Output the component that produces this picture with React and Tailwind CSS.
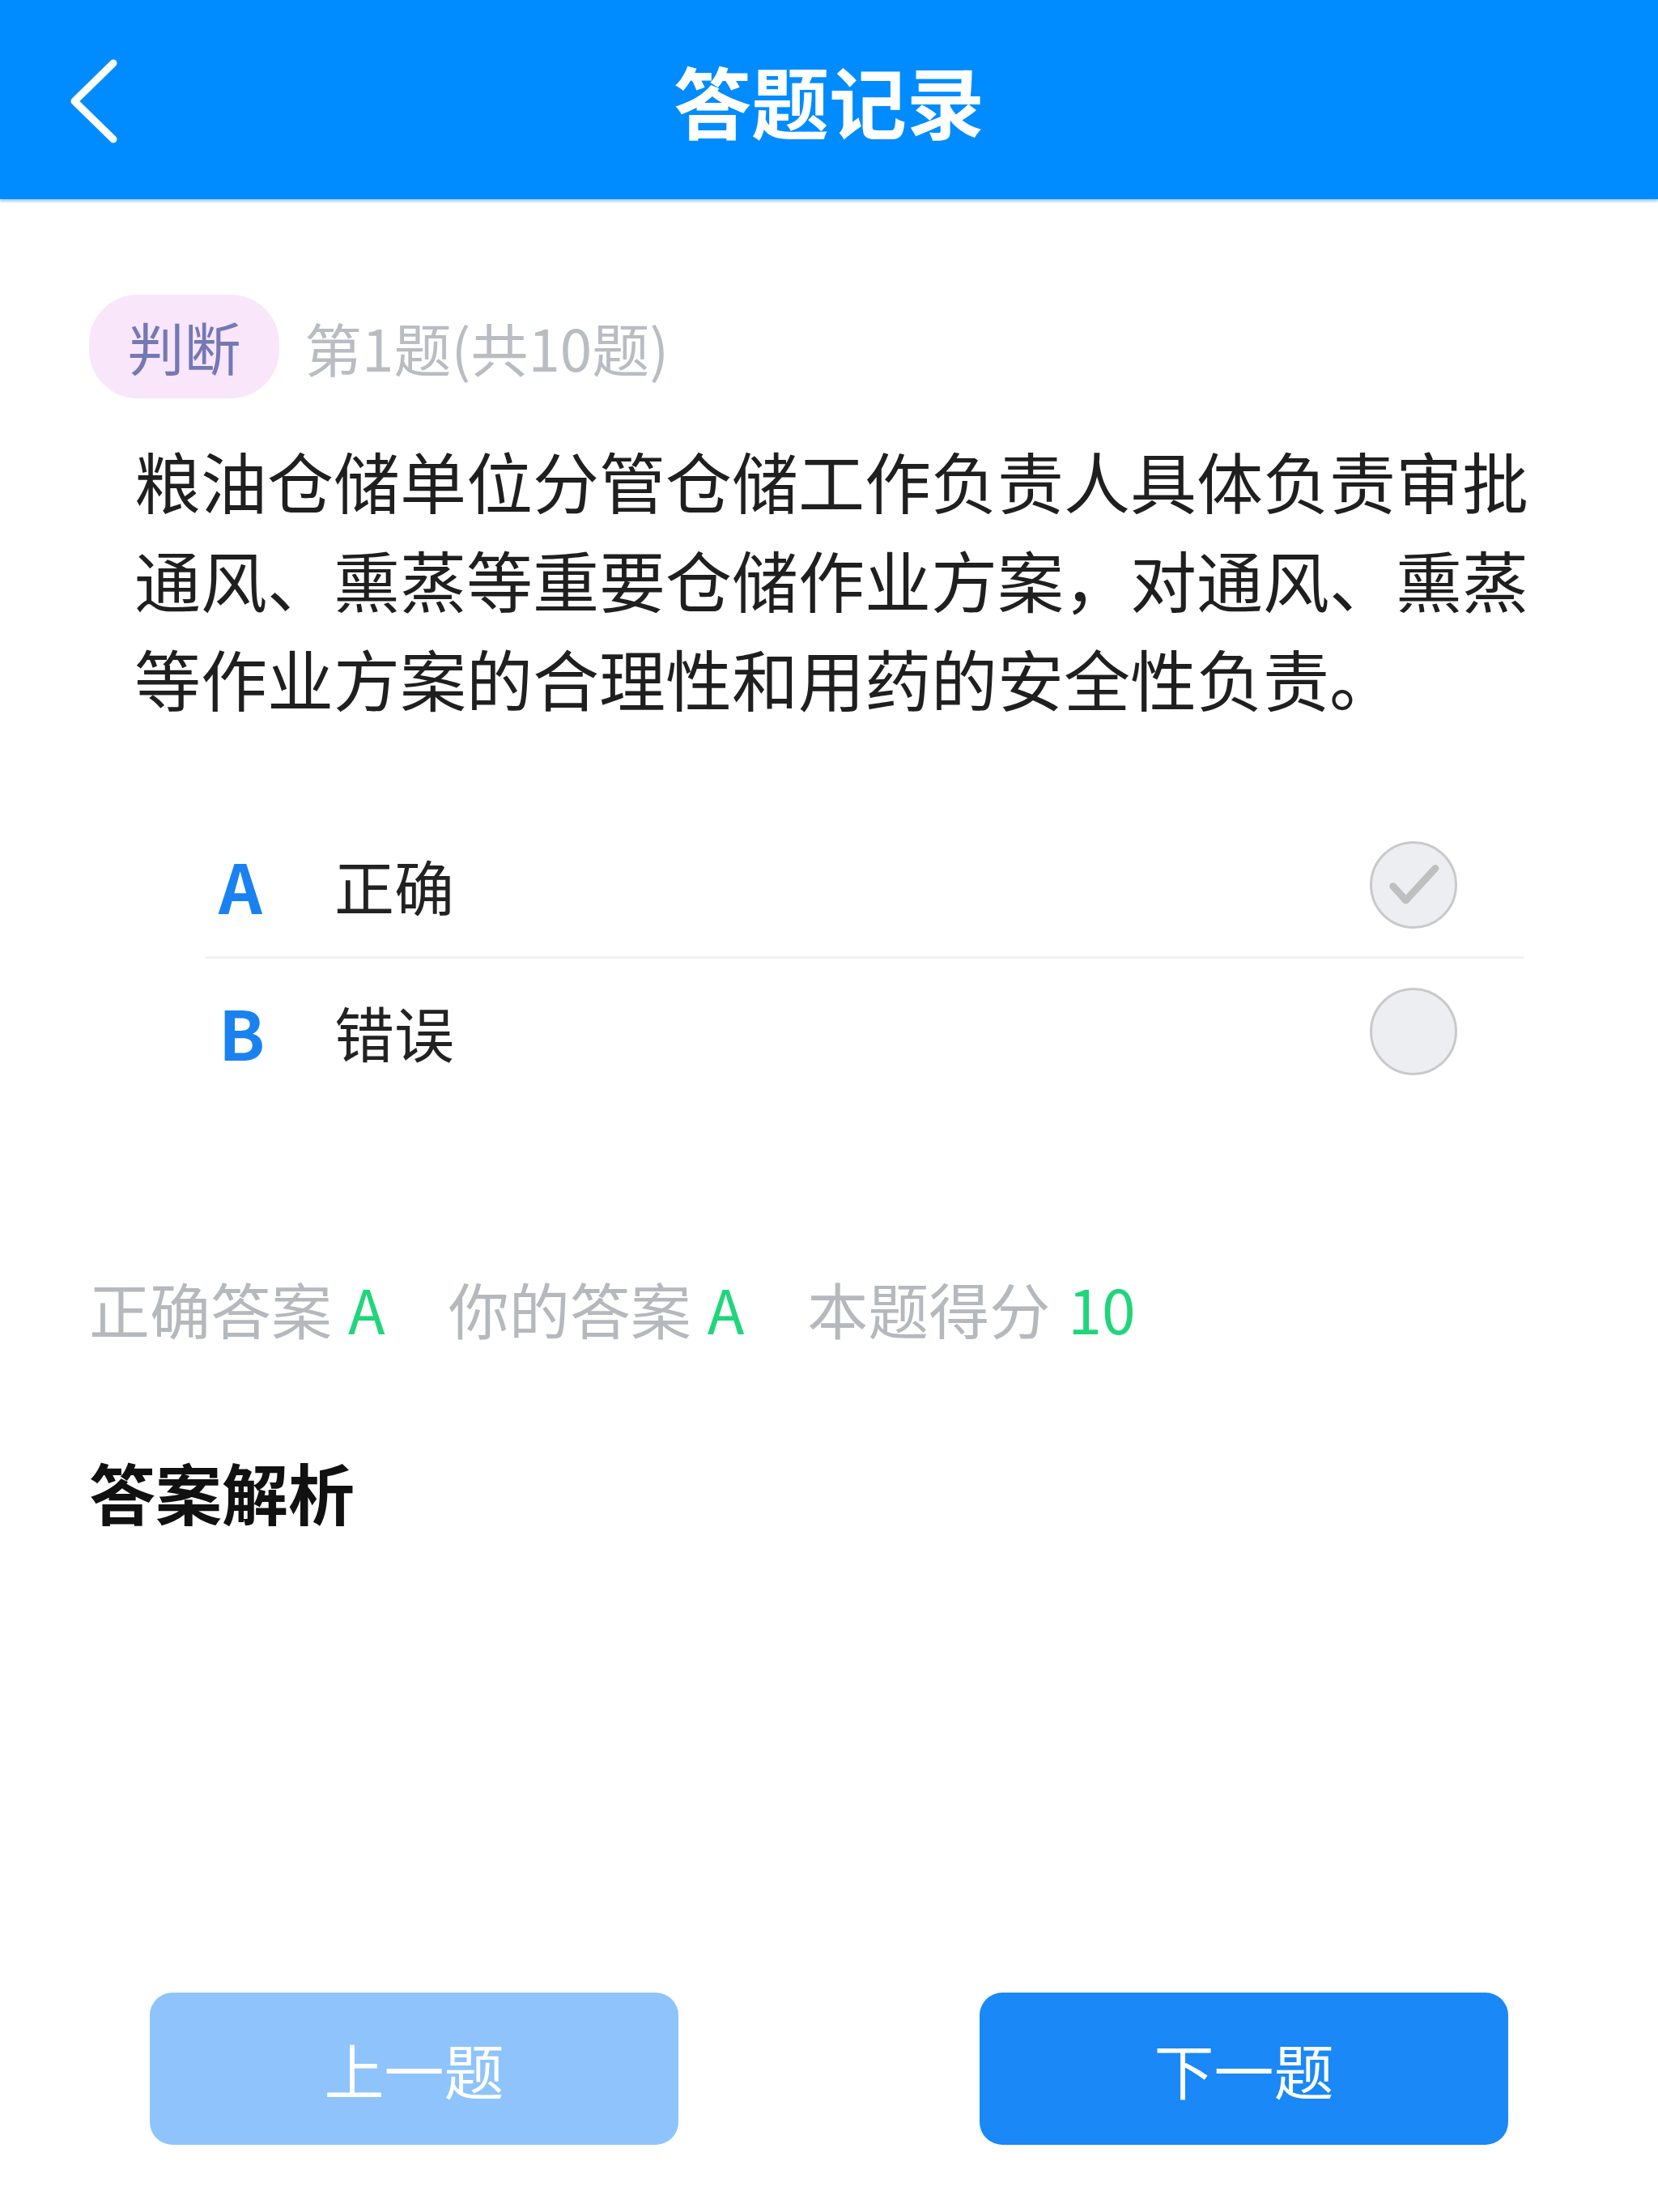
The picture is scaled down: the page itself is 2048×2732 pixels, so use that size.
import React from 'react';

const font = { fontFamily: '"Noto Sans CJK SC", "Noto Sans", sans-serif' };

const Option = ({ letter, label, checked, last }) => (
  <div className={`flex items-center h-[180px] pl-[17px] pr-[82px] ${last ? '' : 'border-b-[3px] border-[#f2f2f2]'}`}>
    <span className="w-[143px] text-[84px] font-bold text-[#1a82f0] leading-none">{letter}</span>
    <span className="flex-1 text-[74px] text-[#222] leading-none">{label}</span>
    <span className="w-[108px] h-[108px] rounded-full bg-[#eceef2] border-[3px] border-[#c9c9c9] flex items-center justify-center">
      {checked && (
        <svg width="76" height="76" viewBox="0 0 24 24" fill="none" stroke="#bfbfbf" strokeWidth="2.8" strokeLinecap="round" strokeLinejoin="round">
          <path d="M4 12.5l5 5.5L20.5 5.5" />
        </svg>
      )}
    </span>
  </div>
);

const App = () => {
  return (
    <div className="w-[2048px] h-[2732px] bg-white flex flex-col" style={font}>
      <header className="h-[246px] bg-[#008cff] flex items-center relative shadow-[0_3px_3px_rgba(0,120,255,0.35)]">
        <button className="absolute left-[70px] top-[70px] w-[90px] h-[110px] flex items-center justify-center">
          <svg width="70" height="106" viewBox="0 0 70 106" fill="none" stroke="white" strokeWidth="9" strokeLinecap="round" strokeLinejoin="round">
            <path d="M60 6L12 53l48 47" />
          </svg>
        </button>
        <h1 className="w-full text-center text-white text-[96px] font-bold leading-none">答题记录</h1>
      </header>

      <main className="flex-1 flex flex-col px-[110px]">
        <div className="flex items-center mt-[118px]">
          <span className="w-[235px] h-[128px] rounded-[60px] bg-[#f9e6fb] text-[#7479b3] text-[70px] flex items-center justify-center leading-none">判断</span>
          <span className="ml-[31px] text-[71px] text-[#b9bdc3] leading-none">第1题(共10题)</span>
        </div>

        <p className="mt-[40px] ml-[56px] w-[1740px] text-[82px] leading-[122px] text-[#1f1f1f]">
          粮油仓储单位分管仓储工作负责人具体负责审批通风、熏蒸等重要仓储作业方案，对通风、熏蒸等作业方案的合理性和用药的安全性负责。
        </p>

        <div className="mt-[106px] ml-[143px] w-[1629px]">
          <Option letter="A" label="正确" checked />
          <Option letter="B" label="错误" last />
        </div>

        <div className="mt-[214px] flex items-center gap-[78px] text-[75px] text-[#b5b9be] leading-none">
          <span>正确答案<span className="ml-[20px] text-[#1fd67a]">A</span></span>
          <span>你的答案<span className="ml-[20px] text-[#1fd67a]">A</span></span>
          <span>本题得分<span className="ml-[22px] text-[#1fd67a]">10</span></span>
        </div>

        <h2 className="mt-[148px] text-[82px] font-bold text-[#111] leading-none">答案解析</h2>
      </main>

      <footer className="flex justify-between px-[185px] pb-[83px]">
        <button className="w-[653px] h-[188px] rounded-[28px] bg-[#8ec4fb] text-white text-[74px] leading-none">上一题</button>
        <button className="w-[653px] h-[188px] rounded-[28px] bg-[#1a88f6] text-white text-[74px] leading-none">下一题</button>
      </footer>
    </div>
  );
};

export default App;
